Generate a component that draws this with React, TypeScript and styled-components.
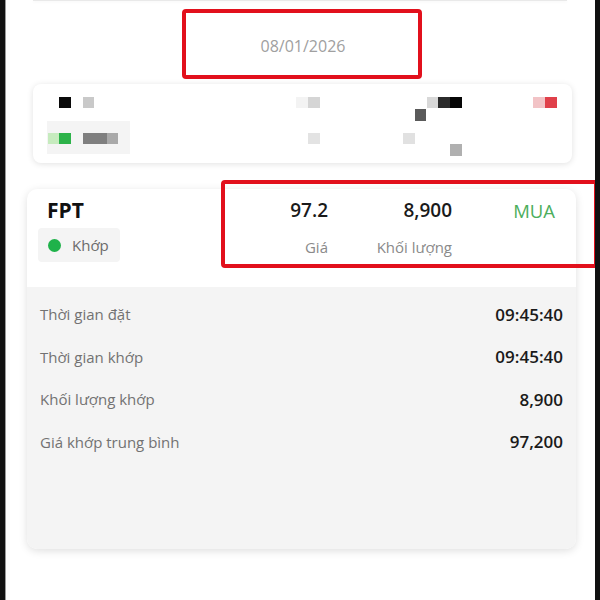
import React from "react";
import styled, { createGlobalStyle } from "styled-components";

const GlobalStyle = createGlobalStyle`
	* {
		box-sizing: border-box;
	}
	body {
		margin: 0;
		background: #fff;
		font-family: "Open Sans", "Noto Sans", sans-serif;
	}
`;

const details = [
	{ label: "Thời gian đặt", value: "09:45:40" },
	{ label: "Thời gian khớp", value: "09:45:40" },
	{ label: "Khối lượng khớp", value: "8,900" },
	{ label: "Giá khớp trung bình", value: "97,200" },
];

// blurred (pixelated) row of the previous order
const mosaic = [
	{ x: 14, y: 37, w: 83, h: 33, c: "#f4f4f4" },
	{ x: 26, y: 13, w: 12, h: 11, c: "#0a0a0a" },
	{ x: 50, y: 13, w: 11, h: 11, c: "#c9c9c9" },
	{ x: 263, y: 13, w: 12, h: 11, c: "#f3f3f3" },
	{ x: 275, y: 13, w: 12, h: 11, c: "#d5d5d5" },
	{ x: 394, y: 13, w: 11, h: 11, c: "#d8d8d8" },
	{ x: 405, y: 13, w: 12, h: 11, c: "#2b2b2b" },
	{ x: 417, y: 13, w: 12, h: 11, c: "#060606" },
	{ x: 382, y: 25, w: 11, h: 12, c: "#5a5a5a" },
	{ x: 500, y: 13, w: 12, h: 11, c: "#f2c3c6" },
	{ x: 512, y: 13, w: 12, h: 11, c: "#e0404a" },
	{ x: 15, y: 49, w: 11, h: 11, c: "#c6ebbe" },
	{ x: 26, y: 49, w: 12, h: 11, c: "#2db34a" },
	{ x: 50, y: 49, w: 24, h: 11, c: "#7f7f7f" },
	{ x: 74, y: 49, w: 11, h: 11, c: "#a9a9a9" },
	{ x: 275, y: 49, w: 12, h: 11, c: "#e3e3e3" },
	{ x: 370, y: 49, w: 12, h: 11, c: "#e1e1e1" },
	{ x: 417, y: 60, w: 12, h: 12, c: "#b0b0b0" },
];

export default function App() {
	return (
		<>
			<GlobalStyle />
			<Frame>
				<PrevCard />
				<DateBox>
					<DateText>08/01/2026</DateText>
				</DateBox>
				<BlurCard>
					<svg width="539" height="79" viewBox="0 0 539 79">
						{mosaic.map((m, i) => (
							<rect key={i} x={m.x} y={m.y} width={m.w} height={m.h} fill={m.c} />
						))}
					</svg>
				</BlurCard>
				<OrderCard>
					<Highlight />
					<Header>
						<Symbol>FPT</Symbol>
						<Value>97.2</Value>
						<Value>8,900</Value>
						<Side>MUA</Side>
						<Badge>
							<Dot />
							Khớp
						</Badge>
						<Label>Giá</Label>
						<Label>Khối lượng</Label>
						<span />
					</Header>
					<Details>
						{details.map((d) => (
							<Row key={d.label}>
								<RowLabel>{d.label}</RowLabel>
								<RowValue>{d.value}</RowValue>
							</Row>
						))}
					</Details>
				</OrderCard>
			</Frame>
		</>
	);
}

const Frame = styled.div`
	min-height: 600px;
	border-left: 5px solid #111;
	border-right: 5px solid #111;
	box-shadow: inset 1px 0 0 #9a9a9a;
	overflow: hidden;
	display: flex;
	flex-direction: column;
`;

const PrevCard = styled.div`
	height: 1px;
	margin: 0 28px;
	background: #e9e9e9;
	box-shadow: 0 1px 3px rgba(0, 0, 0, 0.06);
`;

const DateBox = styled.div`
	align-self: flex-start;
	margin: 8px 0 0 177px;
	width: 240px;
	height: 70px;
	border: 4px solid #e2101c;
	border-radius: 4px;
	display: flex;
	align-items: center;
	justify-content: center;
	padding-top: 4px;
`;

const DateText = styled.span`
	font-size: 16px;
	color: #a0a0a0;
	padding-left: 2px;
`;

const BlurCard = styled.div`
	margin: 5px 23px 0 28px;
	height: 79px;
	background: #fff;
	border-radius: 8px;
	box-shadow: 0 1px 6px rgba(0, 0, 0, 0.12);
	svg {
		display: block;
	}
`;

const OrderCard = styled.div`
	position: relative;
	margin: 26px 19px 0 22px;
	background: #fff;
	border-radius: 10px;
	box-shadow: 0 2px 8px rgba(0, 0, 0, 0.13);
`;

const Highlight = styled.div`
	position: absolute;
	left: 194px;
	top: -9px;
	width: 377px;
	height: 88px;
	border: 4px solid #e2101c;
	border-radius: 4px;
	pointer-events: none;
`;

const Header = styled.div`
	display: grid;
	grid-template-columns: 1fr 90px 124px 103px;
	grid-template-rows: 26px 34px;
	row-gap: 5px;
	align-items: center;
	padding: 8px 21px 25px 20px;
`;

const Symbol = styled.div`
	font-size: 21px;
	font-weight: 700;
	color: #111;
`;

const Value = styled.div`
	text-align: right;
	font-size: 19px;
	font-weight: 600;
	color: #1a1a1a;
`;

const Side = styled.div`
	text-align: right;
	font-size: 18.5px;
	color: #4cae5c;
`;

const Badge = styled.div`
	justify-self: start;
	margin-left: -9px;
	display: inline-flex;
	align-items: center;
	gap: 11px;
	height: 34px;
	padding: 0 11px 0 10px;
	background: #f4f4f4;
	border-radius: 4px;
	font-size: 15px;
	color: #6b6b6b;
`;

const Dot = styled.span`
	width: 13px;
	height: 13px;
	border-radius: 50%;
	background: #1fb24a;
`;

const Label = styled.div`
	text-align: right;
	font-size: 15px;
	color: #8a8a8a;
	padding-top: 3px;
`;

const Details = styled.div`
	background: #f4f4f4;
	border-radius: 0 0 10px 10px;
	padding: 6px 13px 86px 13px;
`;

const Row = styled.div`
	display: flex;
	align-items: center;
	justify-content: space-between;
	height: 42.5px;
`;

const RowLabel = styled.span`
	font-size: 15px;
	color: #727272;
`;

const RowValue = styled.span`
	font-size: 17px;
	font-weight: 600;
	color: #1a1a1a;
`;
